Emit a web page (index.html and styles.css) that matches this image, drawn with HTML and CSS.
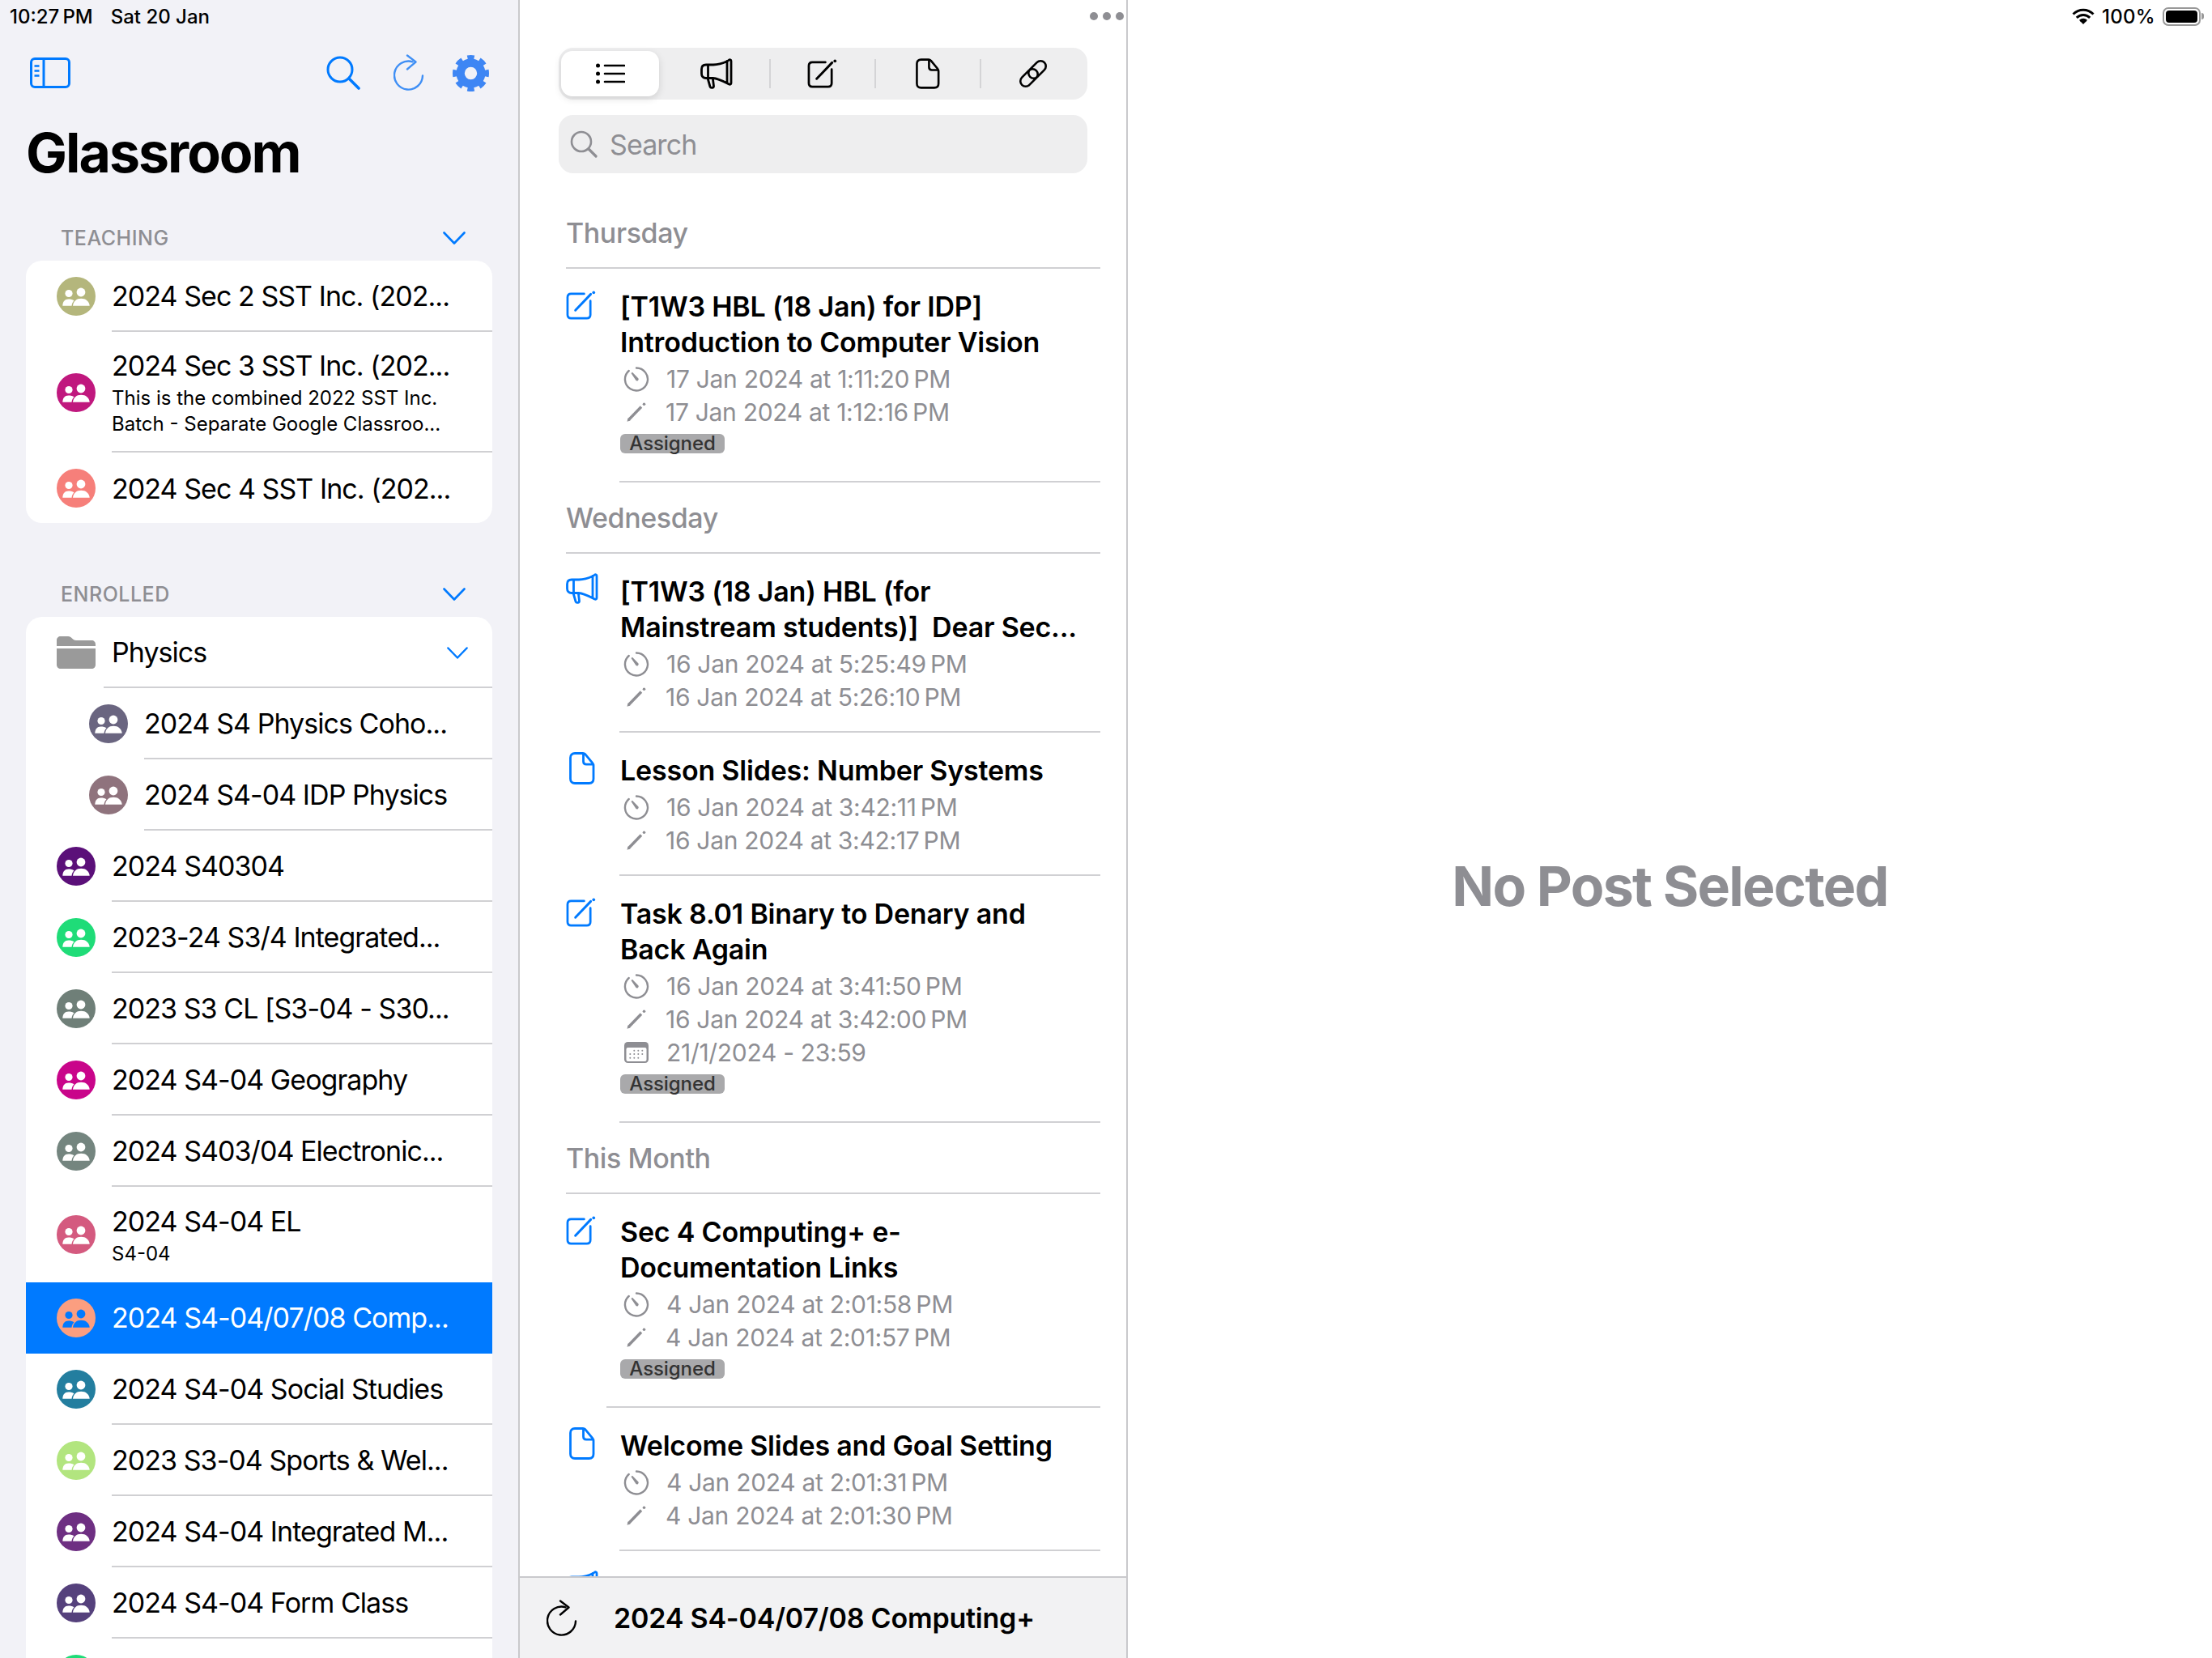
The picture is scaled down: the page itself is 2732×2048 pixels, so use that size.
FILE: index.html
```html
<!DOCTYPE html>
<html lang="en">
<head>
<meta charset="utf-8">
<title>Glassroom</title>
<link rel="stylesheet" href="styles.css">
</head>
<body>
<svg class="defs" width="0" height="0" aria-hidden="true">
  <symbol id="people" viewBox="0 0 48 48">
    <circle cx="15" cy="20.500" r="4.600" fill="currentColor"/>
    <circle cx="30" cy="19" r="5.400" fill="currentColor"/>
    <path d="M7.300 35.800h11.200c.3-3 1.500-5 3-6.300-1.500-1.400-4-2-7-2-4.500 0-7 3-7.200 8.300z" fill="currentColor"/>
    <path d="M20 35.800C20.500 30 24.500 26.700 30.200 26.700S40.200 30 40.700 35.800z" fill="currentColor"/>
  </symbol>
  <symbol id="megaphone" viewBox="0 0 40 38">
    <path d="M33.500 3.500 35.500 2c1.200-.6 2.500 0 2.500 1.500v27c0 1.500-1.300 2.100-2.500 1.500-7-3.500-13.500-7-20-7.500H7c-3.500 0-5.500-2-5.500-5.500v-5.500C1.500 10 3.500 8 7 8h9c6 0 12-2 17.500-4.500zM33 3.500v27M9.500 8v16M9 24.500l3 10.500c.7 2.200 4.700 1.800 4.500-.8l-1.200-9.700" fill="none" stroke="currentColor" stroke-width="2.800" stroke-linejoin="round" stroke-linecap="round"/>
  </symbol>
  <symbol id="compose" viewBox="0 0 38 37">
    <path d="M23 4H6.500C3.800 4 2 5.800 2 8.500v22C2 33.200 3.800 35 6.500 35h20c2.700 0 4.500-1.800 4.500-4.500V13" fill="none" stroke="currentColor" stroke-width="2.800" stroke-linecap="round"/>
    <path d="M12 25 31.500 4.500" fill="none" stroke="currentColor" stroke-width="3" stroke-linecap="round"/>
    <circle cx="35.200" cy="2.400" r="1.900" fill="currentColor"/>
  </symbol>
  <symbol id="doc" viewBox="0 0 32 40">
    <path d="M7 1.500h10c1.200 0 2.200.5 3 1.300l8.700 10.500c.8 1 1.300 2 1.300 3.200V33c0 3.500-2 5.500-5.500 5.500H7c-3.500 0-5.500-2-5.500-5.500V7C1.500 3.500 3.500 1.500 7 1.500z" fill="none" stroke="currentColor" stroke-width="2.800" stroke-linejoin="round"/>
    <path d="M17.500 2v9.500c0 2.400 1.300 3.700 3.700 3.700H30" fill="none" stroke="currentColor" stroke-width="2.800"/>
  </symbol>
  <symbol id="clock" viewBox="0 0 32 32">
    <path d="M16 2.500A14 14 0 1 1 6.700 6" fill="none" stroke="currentColor" stroke-width="2.400" stroke-linecap="round"/>
    <path d="M9.500 9 11 7.800 18.500 15.500a2 2 0 0 1-3 2.500z" fill="currentColor"/>
  </symbol>
  <symbol id="pencil" viewBox="0 0 26 26">
    <path d="M3.500 22.500 19 6.500" stroke="currentColor" stroke-width="3.400" fill="none"/>
    <path d="M1.500 24.800 2.500 20.500 5.500 23.500z" fill="currentColor"/>
    <circle cx="22.500" cy="3.200" r="1.800" fill="currentColor"/>
  </symbol>
  <symbol id="cal" viewBox="0 0 30 26">
    <rect width="30" height="26" rx="4.500" fill="currentColor"/>
    <rect x="2.500" y="7" width="25" height="17" rx="2" fill="#fff"/>
    <path d="M12.300 10.700v.1M17.300 10.700v.1M22.300 10.700v.1M7.300 15v.1M12.300 15v.1M17.300 15v.1M22.300 15v.1M7.300 19.700v.1M12.300 19.700v.1M17.300 19.700v.1" stroke="currentColor" stroke-width="2" stroke-linecap="round" fill="none"/>
  </symbol>
  <symbol id="chev" viewBox="0 0 28 16">
    <path d="M1.500 1.500 14 14.500 26.500 1.500" fill="none" stroke="currentColor" stroke-width="2.600" stroke-linecap="round" stroke-linejoin="round"/>
  </symbol>
  <symbol id="refresh" viewBox="0 0 38 46">
    <path d="M23.500 9.300A17.500 17.500 0 1 0 36 26.500" fill="none" stroke="currentColor" stroke-width="2.400" stroke-linecap="round"/>
    <path d="M17 1.500 27.500 9.500 17 18.500" fill="none" stroke="currentColor" stroke-width="2.400" stroke-linecap="round" stroke-linejoin="round"/>
  </symbol>
</svg>

<div class="app">
  <aside class="sidebar">
    <div class="status-left"><span class="clock-time">10:27&#8239;PM</span><span>Sat 20 Jan</span></div>
    <div class="toolbar">
      <svg class="tb-sidebar" viewBox="0 0 50 38"><rect x="1.500" y="1.500" width="47" height="35" rx="4.500" fill="none" stroke="#007aff" stroke-width="3"/><path d="M17 2v34" stroke="#007aff" stroke-width="3"/><path d="M5.500 10.500h6M5.500 16.500h6M5.500 22.500h6" stroke="#007aff" stroke-width="2.500"/></svg>
      <div class="tb-right">
        <svg class="tb-search" viewBox="0 0 42 42"><circle cx="17" cy="17" r="15" fill="none" stroke="#007aff" stroke-width="3"/><path d="M28 28 40 40" stroke="#007aff" stroke-width="3.600" stroke-linecap="round"/></svg>
        <svg class="tb-refresh"><use href="#refresh"/></svg>
        <svg class="tb-gear" viewBox="0 0 45 45"><circle cx="22.500" cy="22.500" r="12.850" fill="none" stroke="#3e86f4" stroke-width="10.300"/><circle cx="22.500" cy="22.500" r="19.500" fill="none" stroke="#3e86f4" stroke-width="6" pathLength="80" stroke-dasharray="5.500 4.500" stroke-dashoffset="2.750"/></svg>
      </div>
    </div>
    <h1 class="app-title">Glassroom</h1>

    <div class="sec-head"><span>TEACHING</span><svg class="sec-chev"><use href="#chev"/></svg></div>
    <div class="card card-closed">
      <div class="row c1"><svg class="av"><circle cx="24" cy="24" r="24"/><use href="#people"/></svg><div class="row-body"><span class="row-t">2024 Sec 2 SST Inc. (202...</span></div></div>
      <div class="row row-tall c2"><svg class="av"><circle cx="24" cy="24" r="24"/><use href="#people"/></svg><div class="row-body"><span class="row-t">2024 Sec 3 SST Inc. (202...</span><span class="row-s">This is the combined 2022 SST Inc.<br>Batch - Separate Google Classroo...</span></div></div>
      <div class="row row-last c3"><svg class="av"><circle cx="24" cy="24" r="24"/><use href="#people"/></svg><div class="row-body"><span class="row-t">2024 Sec 4 SST Inc. (202...</span></div></div>
    </div>

    <div class="sec-head sec-gap"><span>ENROLLED</span><svg class="sec-chev"><use href="#chev"/></svg></div>
    <div class="card">
      <div class="row row-folder"><svg class="folder" viewBox="0 0 48 40"><path d="M0 5c0-3 2-5 5-5h9c2.500 0 3.500 1 5 2.500S21.500 5 24 5h19c3 0 5 2 5 5v2H0z" fill="#9a9a9a"/><path d="M0 15h48v20c0 3-2 5-5 5H5c-3 0-5-2-5-5z" fill="#9a9a9a"/></svg><div class="row-body row-body-folder"><span class="row-t">Physics</span><svg class="folder-chev"><use href="#chev"/></svg></div></div>
      <div class="row row-sub c4"><svg class="av"><circle cx="24" cy="24" r="24"/><use href="#people"/></svg><div class="row-body"><span class="row-t">2024 S4 Physics Coho...</span></div></div>
      <div class="row row-sub c5"><svg class="av"><circle cx="24" cy="24" r="24"/><use href="#people"/></svg><div class="row-body"><span class="row-t">2024 S4-04 IDP Physics</span></div></div>
      <div class="row c6"><svg class="av"><circle cx="24" cy="24" r="24"/><use href="#people"/></svg><div class="row-body"><span class="row-t">2024 S40304</span></div></div>
      <div class="row c7"><svg class="av"><circle cx="24" cy="24" r="24"/><use href="#people"/></svg><div class="row-body"><span class="row-t">2023-24 S3/4 Integrated...</span></div></div>
      <div class="row c8"><svg class="av"><circle cx="24" cy="24" r="24"/><use href="#people"/></svg><div class="row-body"><span class="row-t">2023 S3 CL [S3-04 - S30...</span></div></div>
      <div class="row c9"><svg class="av"><circle cx="24" cy="24" r="24"/><use href="#people"/></svg><div class="row-body"><span class="row-t">2024 S4-04 Geography</span></div></div>
      <div class="row c10"><svg class="av"><circle cx="24" cy="24" r="24"/><use href="#people"/></svg><div class="row-body"><span class="row-t">2024 S403/04 Electronic...</span></div></div>
      <div class="row row-el c11"><svg class="av"><circle cx="24" cy="24" r="24"/><use href="#people"/></svg><div class="row-body row-body-plain"><span class="row-t">2024 S4-04 EL</span><span class="row-s">S4-04</span></div></div>
      <div class="row row-sel c12"><svg class="av"><circle cx="24" cy="24" r="24"/><use href="#people"/></svg><div class="row-body row-body-plain"><span class="row-t">2024 S4-04/07/08 Comp...</span></div></div>
      <div class="row c13"><svg class="av"><circle cx="24" cy="24" r="24"/><use href="#people"/></svg><div class="row-body"><span class="row-t">2024 S4-04 Social Studies</span></div></div>
      <div class="row c14"><svg class="av"><circle cx="24" cy="24" r="24"/><use href="#people"/></svg><div class="row-body"><span class="row-t">2023 S3-04 Sports &amp; Wel...</span></div></div>
      <div class="row c15"><svg class="av"><circle cx="24" cy="24" r="24"/><use href="#people"/></svg><div class="row-body"><span class="row-t">2024 S4-04 Integrated M...</span></div></div>
      <div class="row c16"><svg class="av"><circle cx="24" cy="24" r="24"/><use href="#people"/></svg><div class="row-body"><span class="row-t">2024 S4-04 Form Class</span></div></div>
      <div class="row c7"><svg class="av"><circle cx="24" cy="24" r="24"/><use href="#people"/></svg><div class="row-body"></div></div>
    </div>
  </aside>

  <main class="middle">
    <div class="dots"><i></i><i></i><i></i></div>
    <div class="segmented">
      <div class="seg seg-on"><svg class="seg-list" viewBox="0 0 36 26"><circle cx="2.500" cy="3" r="2.500" fill="#000"/><circle cx="2.500" cy="13" r="2.500" fill="#000"/><circle cx="2.500" cy="23" r="2.500" fill="#000"/><path d="M11 3h24M11 13h24M11 23h24" stroke="#000" stroke-width="2.600" stroke-linecap="round"/></svg></div>
      <div class="seg seg-1"><svg class="seg-mega"><use href="#megaphone"/></svg></div>
      <div class="seg seg-2"><svg class="seg-comp"><use href="#compose"/></svg></div>
      <div class="seg seg-3"><svg class="seg-doc"><use href="#doc"/></svg></div>
      <div class="seg seg-4"><svg class="seg-link" viewBox="0 0 36 36"><g fill="none" stroke="#000" stroke-width="2.600"><rect x="16.500" y="0.500" width="13" height="25" rx="6.500" transform="rotate(45 23 13)"/><rect x="6.500" y="10.500" width="13" height="25" rx="6.500" transform="rotate(45 13 23)"/></g></svg></div>
    </div>
    <div class="search"><svg class="search-ic" viewBox="0 0 34 34"><circle cx="14" cy="14" r="12" fill="none" stroke="#8e8e93" stroke-width="2.600"/><path d="M23 23 32 32" stroke="#8e8e93" stroke-width="3.200" stroke-linecap="round"/></svg><span>Search</span></div>

    <div class="posts">
      <div class="day">Thursday</div>
      <article class="post post-badge">
        <svg class="post-ic ic-comp"><use href="#compose"/></svg>
        <div class="post-main">
          <h3>[T1W3 HBL (18 Jan) for IDP]<br>Introduction to Computer Vision</h3>
          <div class="meta"><svg class="m-clock"><use href="#clock"/></svg><span>17 Jan 2024 at 1:11:20&#8239;PM</span></div>
          <div class="meta meta-p"><svg class="m-pen"><use href="#pencil"/></svg><span>17 Jan 2024 at 1:12:16&#8239;PM</span></div>
          <span class="badge">Assigned</span>
        </div>
      </article>
      <div class="sep"></div>

      <div class="day">Wednesday</div>
      <article class="post">
        <svg class="post-ic ic-mega"><use href="#megaphone"/></svg>
        <div class="post-main">
          <h3>[T1W3 (18 Jan) HBL (for<br>Mainstream students)]&nbsp; Dear Sec...</h3>
          <div class="meta"><svg class="m-clock"><use href="#clock"/></svg><span>16 Jan 2024 at 5:25:49&#8239;PM</span></div>
          <div class="meta meta-p"><svg class="m-pen"><use href="#pencil"/></svg><span>16 Jan 2024 at 5:26:10&#8239;PM</span></div>
        </div>
      </article>
      <div class="sep"></div>
      <article class="post">
        <svg class="post-ic ic-doc"><use href="#doc"/></svg>
        <div class="post-main">
          <h3>Lesson Slides: Number Systems</h3>
          <div class="meta"><svg class="m-clock"><use href="#clock"/></svg><span>16 Jan 2024 at 3:42:11&#8239;PM</span></div>
          <div class="meta meta-p"><svg class="m-pen"><use href="#pencil"/></svg><span>16 Jan 2024 at 3:42:17&#8239;PM</span></div>
        </div>
      </article>
      <div class="sep"></div>
      <article class="post post-badge">
        <svg class="post-ic ic-comp"><use href="#compose"/></svg>
        <div class="post-main">
          <h3>Task 8.01 Binary to Denary and<br>Back Again</h3>
          <div class="meta"><svg class="m-clock"><use href="#clock"/></svg><span>16 Jan 2024 at 3:41:50&#8239;PM</span></div>
          <div class="meta meta-p"><svg class="m-pen"><use href="#pencil"/></svg><span>16 Jan 2024 at 3:42:00&#8239;PM</span></div>
          <div class="meta"><svg class="m-cal"><use href="#cal"/></svg><span>21/1/2024 - 23:59</span></div>
          <span class="badge">Assigned</span>
        </div>
      </article>
      <div class="sep"></div>

      <div class="day">This Month</div>
      <article class="post post-badge">
        <svg class="post-ic ic-comp"><use href="#compose"/></svg>
        <div class="post-main">
          <h3>Sec 4 Computing+ e-<br>Documentation Links</h3>
          <div class="meta"><svg class="m-clock"><use href="#clock"/></svg><span>4 Jan 2024 at 2:01:58&#8239;PM</span></div>
          <div class="meta meta-p"><svg class="m-pen"><use href="#pencil"/></svg><span>4 Jan 2024 at 2:01:57&#8239;PM</span></div>
          <span class="badge">Assigned</span>
        </div>
      </article>
      <div class="sep sep-long"></div>
      <article class="post">
        <svg class="post-ic ic-doc"><use href="#doc"/></svg>
        <div class="post-main">
          <h3>Welcome Slides and Goal Setting</h3>
          <div class="meta"><svg class="m-clock"><use href="#clock"/></svg><span>4 Jan 2024 at 2:01:31&#8239;PM</span></div>
          <div class="meta meta-p"><svg class="m-pen"><use href="#pencil"/></svg><span>4 Jan 2024 at 2:01:30&#8239;PM</span></div>
        </div>
      </article>
      <div class="sep"></div>
      <article class="post">
        <svg class="post-ic ic-mega"><use href="#megaphone"/></svg>
        <div class="post-main"></div>
      </article>
    </div>

    <div class="bottom"><svg class="bottom-ic"><use href="#refresh"/></svg><span>2024 S4-04/07/08 Computing+</span></div>
  </main>

  <section class="detail">
    <div class="status-right">
      <svg class="wifi" viewBox="0 0 28 20"><path d="M1.500 7.500C8.500.5 19.500.5 26.500 7.500M5.800 11.800c4.700-4.500 11.700-4.500 16.400 0M10 16c2.500-2.200 5.500-2.200 8 0" fill="none" stroke="#000" stroke-width="3"/><path d="M14 20l-3.400-3.600c2-1.500 4.800-1.500 6.800 0z" fill="#000"/></svg>
      <span>100%</span>
      <div class="battery"><div class="battery-fill"></div></div><div class="battery-nub"></div>
    </div>
    <div class="empty">No Post Selected</div>
  </section>
</div>
</body>
</html>
```

FILE: styles.css
```css
* { box-sizing: border-box; }
html, body { margin: 0; padding: 0; height: 2048px; overflow: hidden; background: #fff; }
body { font-family: Inter, "Noto Sans", sans-serif; color: #000; }
.defs { position: absolute; }
.app { display: flex; width: 2732px; height: 2048px; overflow: hidden; }

/* sidebar */
.sidebar { width: 642px; flex: none; height: 2048px; overflow: hidden; background: #f2f2f7; border-right: 2px solid #c9c9cc; padding: 0 32px; }
.status-left { height: 40px; display: flex; align-items: center; margin-left: -20px; font-size: 24px; font-weight: 500; letter-spacing: 0; gap: 22px; }
.toolbar { height: 80px; display: flex; align-items: center; justify-content: space-between; padding: 0 4px 0 5px; margin-top: 10px; }
.tb-sidebar { width: 50px; height: 38px; }
.tb-right { display: flex; align-items: center; }
.tb-search { width: 42px; height: 42px; }
.tb-refresh { width: 38px; height: 46px; margin-left: 41px; color: #3f8ff5; }
.tb-gear { width: 45px; height: 45px; margin-left: 35px; }
.app-title { margin: 17px 0 0 0; font-size: 68px; line-height: 82px; font-weight: 700; letter-spacing: -2px; }
.sec-head { height: 50px; margin-top: 43px; padding: 0 33px 6px 43px; display: flex; align-items: center; justify-content: space-between; font-size: 25px; font-weight: 500; color: #8e8e93; letter-spacing: .5px; }
.sec-gap { margin-top: 66px; }
.sec-chev { width: 28px; height: 16px; color: #007aff; }
.card { background: #fff; border-radius: 20px 20px 0 0; overflow: hidden; }
.card-closed { border-radius: 20px; }
.row { --av: #888; height: 88px; display: flex; align-items: stretch; padding-left: 38px; }
.row-tall { height: 149px; }
.row-last { height: 87px; }
.row-el { height: 118px; }
.av { width: 48px; height: 48px; flex: none; align-self: center; color: #fff; fill: var(--av); overflow: visible; }
.av use { width: 48px; height: 48px; }
.row-body { flex: 1; min-width: 0; margin-left: 20px; padding: 2px 0 0 0; border-bottom: 2px solid #d0d0d3; display: flex; flex-direction: column; justify-content: center; }
.row-last .row-body, .row-body-plain { border-bottom: 0; }
.row-t { font-size: 34px; line-height: 44px; letter-spacing: -.95px; white-space: nowrap; }
.row-s { font-size: 24px; line-height: 32px; white-space: nowrap; margin-top: 2px; }
.row-sub { padding-left: 78px; }
.row-sel { background: #007aff; color: #fff; }
.row-sel .av { color: #007aff; }
.row-sel .row-body { padding-top: 0; }
.row-folder { height: 88px; align-items: center; padding-left: 38px; position: relative; }
.folder { width: 48px; height: 40px; flex: none; }
.row-body-folder { margin-left: 10px; padding-left: 10px; height: 88px; flex-direction: row; align-items: center; justify-content: space-between; padding-right: 30px; }
.folder-chev { width: 26px; height: 15px; color: #007aff; }
.c1 { --av: #b4b67c; } .c2 { --av: #c0187e; } .c3 { --av: #f67f7a; } .c4 { --av: #6a6580; }
.c5 { --av: #8f737d; } .c6 { --av: #5b1079; } .c7 { --av: #1fdc78; } .c8 { --av: #6f7f78; }
.c9 { --av: #c9058a; } .c10 { --av: #74857f; } .c11 { --av: #d45a7f; } .c12 { --av: #fb9e80; }
.c13 { --av: #237e9f; } .c14 { --av: #b2e57f; } .c15 { --av: #6e2f82; } .c16 { --av: #55417c; }

/* middle */
.middle { width: 751px; flex: none; height: 2048px; display: flex; flex-direction: column; border-right: 2px solid #c9c9cc; overflow: hidden; }
.dots { height: 59px; padding: 15px 3px 0 0; flex: none; display: flex; justify-content: flex-end; gap: 6px; }
.dots i { width: 10px; height: 10px; border-radius: 50%; background: #8e8e93; }
.segmented { flex: none; margin-left: 48px; width: 653px; height: 64px; background: #eeeeef; border-radius: 18px; display: flex; padding: 4px 3px; }
.seg { height: 56px; display: flex; align-items: center; justify-content: center; position: relative; }
.seg-on { width: 121px; background: #fff; border-radius: 14px; box-shadow: 0 3px 10px rgba(0,0,0,.13); }
.seg-1 { width: 136px; padding-left: 6px; }
.seg-2, .seg-3, .seg-4 { width: 130px; padding-left: 1px; }
.seg-2::before, .seg-3::before, .seg-4::before { content: ""; position: absolute; left: 0; top: 10px; height: 36px; width: 2px; background: #d4d4d6; }
.seg-list { width: 36px; height: 26px; }
.seg-mega { width: 40px; height: 38px; }
.seg-comp { width: 37px; height: 36px; }
.seg-doc { width: 30px; height: 38px; }
.seg-link { width: 36px; height: 36px; }
.search { flex: none; margin: 19px 0 0 48px; width: 653px; height: 72px; background: #eeeeef; border-radius: 18px; display: flex; align-items: center; padding-left: 14px; color: #8e8e93; font-size: 34px; letter-spacing: -.9px; }
.search-ic { width: 34px; height: 34px; margin-right: 15px; }
.posts { flex: 1; min-height: 0; overflow: hidden; margin-top: 30px; padding: 0 32px 0 57px; }
.day { height: 88px; display: flex; align-items: center; font-size: 34px; font-weight: 500; color: #8e8e93; letter-spacing: -.4px; border-bottom: 2px solid #d0d0d3; }
.post { display: flex; padding: 25px 0 22px; }
.post-badge { padding-bottom: 34px; }
.post-ic { flex: none; color: #007aff; margin-top: -1px; }
.ic-comp { width: 37px; height: 36px; margin: 2px 30px 0 0; }
.ic-mega { width: 40px; height: 38px; margin-right: 27px; }
.ic-doc { width: 32px; height: 40px; margin: -1px 31px 0 4px; }
.post-main { min-width: 0; flex: 1; }
h3 { margin: 0 0 2px; font-size: 34px; line-height: 44px; font-weight: 600; letter-spacing: -.2px; }
.meta { height: 41px; display: flex; align-items: center; color: #8e8e93; font-size: 30px; letter-spacing: -.3px; padding-left: 4px; }
.m-clock { width: 32px; height: 32px; margin-right: 21px; flex: none; }
.m-pen { width: 26px; height: 26px; margin: 0 23px 0 3px; flex: none; }
.m-cal { width: 30px; height: 26px; margin: 0 22px 0 1px; flex: none; }
.badge { display: inline-block; margin-top: 7px; height: 24px; width: 129px; text-align: center; background: #a9a9ab; color: #333; border-radius: 6px; font-size: 24px; font-weight: 500; line-height: 24px; letter-spacing: -.1px; }
.sep { height: 2px; background: #d0d0d3; margin-left: 66px; }
.sep-long { margin-left: 50px; }
.bottom { flex: none; height: 101px; border-top: 2px solid #c9c9cc; background: #f2f2f3; display: flex; align-items: center; padding-left: 33px; font-size: 34px; font-weight: 600; letter-spacing: -.2px; }
.bottom-ic { width: 38px; height: 46px; margin-right: 45px; }

/* detail */
.detail { flex: 1; height: 2048px; display: flex; flex-direction: column; }
.status-right { height: 40px; flex: none; display: flex; align-items: center; justify-content: flex-end; padding-right: 10px; font-size: 24px; font-weight: 500; letter-spacing: .3px; }
.wifi { width: 28px; height: 20px; margin-right: 9px; }
.battery { width: 47px; height: 23px; margin-left: 9px; border: 2px solid #999; border-radius: 7px; padding: 2px; }
.battery-fill { height: 100%; background: #000; border-radius: 4px; }
.battery-nub { width: 3px; height: 8px; background: #999; border-radius: 0 3px 3px 0; margin-left: 1px; }
.empty { flex: 1; display: flex; align-items: center; justify-content: center; padding-top: 100px; font-size: 68px; font-weight: 700; color: #8e8e93; letter-spacing: -1.7px; }
```
